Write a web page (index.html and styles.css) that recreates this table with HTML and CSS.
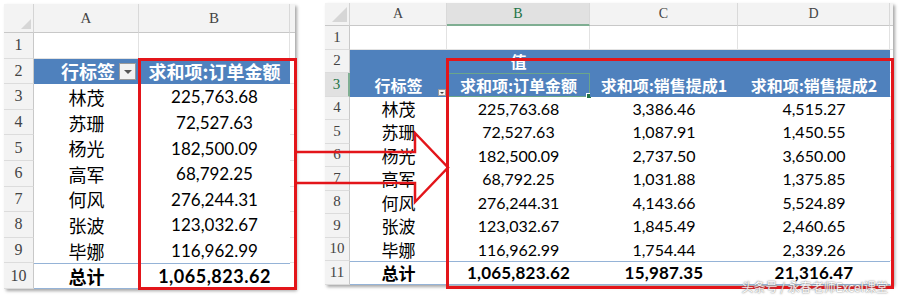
FILE: index.html
```html
<!DOCTYPE html>
<html lang="zh-CN">
<head>
<meta charset="utf-8">
<title>数据透视表</title>
<link rel="stylesheet" href="styles.css">
</head>
<body>
<div class="stage">
  <div class="sheet sheet-l">
    <div class="corner"><span class="tri"></span></div>
    <div class="ch">A</div><div class="ch">B</div><div class="ch edge"></div>

    <div class="rn">1</div><div class="c"></div><div class="c"></div><div class="c edge"></div>

    <div class="rn">2</div>
    <div class="ph ph-label"><span>行标签</span><span class="dd"></span></div>
    <div class="ph">求和项:订单金额</div>
    <div class="c edge"></div>

    <div class="rn">3</div><div class="d name">林茂</div><div class="d num">225,763.68</div><div class="c edge"></div>
    <div class="rn">4</div><div class="d name">苏珊</div><div class="d num">72,527.63</div><div class="c edge"></div>
    <div class="rn">5</div><div class="d name">杨光</div><div class="d num">182,500.09</div><div class="c edge"></div>
    <div class="rn">6</div><div class="d name">高军</div><div class="d num">68,792.25</div><div class="c edge"></div>
    <div class="rn">7</div><div class="d name">何风</div><div class="d num">276,244.31</div><div class="c edge"></div>
    <div class="rn">8</div><div class="d name">张波</div><div class="d num">123,032.67</div><div class="c edge"></div>
    <div class="rn">9</div><div class="d name">毕娜</div><div class="d num">116,962.99</div><div class="c edge"></div>
    <div class="rn">10</div><div class="d name tot">总计</div><div class="d num tot">1,065,823.62</div><div class="c edge"></div>

    <div class="redbox"></div>
  </div>

  <div class="sheet sheet-r">
    <div class="corner"><span class="tri"></span></div>
    <div class="ch">A</div><div class="ch sel">B</div><div class="ch">C</div><div class="ch">D</div><div class="ch edge"></div>

    <div class="rn">1</div><div class="c"></div><div class="c"></div><div class="c"></div><div class="c"></div><div class="c edge"></div>

    <div class="rn">2</div><div class="ph"></div><div class="ph ph-val">值</div><div class="ph"></div><div class="ph"></div><div class="c edge"></div>

    <div class="rn sel">3</div>
    <div class="ph ph-label"><span>行标签</span><span class="dd-sm"></span></div>
    <div class="ph sel">求和项:订单金额</div>
    <div class="ph">求和项:销售提成1</div>
    <div class="ph">求和项:销售提成2</div>
    <div class="c edge"></div>

    <div class="rn">4</div><div class="d name">林茂</div><div class="d num">225,763.68</div><div class="d num">3,386.46</div><div class="d num">4,515.27</div><div class="c edge"></div>
    <div class="rn">5</div><div class="d name">苏珊</div><div class="d num">72,527.63</div><div class="d num">1,087.91</div><div class="d num">1,450.55</div><div class="c edge"></div>
    <div class="rn">6</div><div class="d name">杨光</div><div class="d num">182,500.09</div><div class="d num">2,737.50</div><div class="d num">3,650.00</div><div class="c edge"></div>
    <div class="rn">7</div><div class="d name">高军</div><div class="d num">68,792.25</div><div class="d num">1,031.88</div><div class="d num">1,375.85</div><div class="c edge"></div>
    <div class="rn">8</div><div class="d name">何风</div><div class="d num">276,244.31</div><div class="d num">4,143.66</div><div class="d num">5,524.89</div><div class="c edge"></div>
    <div class="rn">9</div><div class="d name">张波</div><div class="d num">123,032.67</div><div class="d num">1,845.49</div><div class="d num">2,460.65</div><div class="c edge"></div>
    <div class="rn">10</div><div class="d name">毕娜</div><div class="d num">116,962.99</div><div class="d num">1,754.44</div><div class="d num">2,339.26</div><div class="c edge"></div>
    <div class="rn">11</div><div class="d name tot">总计</div><div class="d num tot">1,065,823.62</div><div class="d num tot">15,987.35</div><div class="d num tot">21,316.47</div><div class="c edge"></div>

    <div class="redbox"></div>
  </div>

  <svg class="arrow" viewBox="0 0 165 80" width="165" height="80" aria-hidden="true">
    <polyline points="6,24 125,24 125,5 158,39.5 125,74 125,55 6,55" fill="none" stroke="#e3151a" stroke-width="2.5" stroke-linejoin="miter"/>
  </svg>

  <div class="wm">头条号 / 永春老师Excel课堂</div>
</div>
</body>
</html>
```

FILE: styles.css
```css
* { box-sizing: border-box; }

body {
  margin: 0;
  background: #ffffff;
}

.stage {
  position: relative;
  width: 900px;
  height: 296px;
  display: flex;
  align-items: flex-start;
  overflow: hidden;
  background: #ffffff;
}

.sheet {
  position: relative;
  display: grid;
  background: #ffffff;
  box-shadow: 2px 2px 3px rgba(0, 0, 0, 0.35);
  font-family: "Lato", "Noto Sans CJK SC", sans-serif;
  color: #000;
}

.sheet-l {
  margin: 4px 0 0 4px;
  grid-template-columns: 30px 105px 151px 5px;
  grid-template-rows: 29px repeat(10, 25.6px);
}

.sheet-r {
  margin: 3px 0 0 30px;
  grid-template-columns: 25px 97px 143px 148px 152px 3px;
  grid-template-rows: 23px repeat(11, 23.5px);
}

/* headers */
.corner {
  position: relative;
  background: #f3f3f3;
  border-right: 1px solid #d4d4d4;
  border-bottom: 1px solid #c8c8c8;
}

.tri {
  position: absolute;
  right: 2px;
  bottom: 3px;
  width: 0;
  height: 0;
  border-left: 10px solid transparent;
  border-bottom: 10px solid #d6d6d6;
}

.sheet-r .tri {
  border-left-width: 15px;
  border-bottom-width: 15px;
}

.ch {
  display: flex;
  align-items: center;
  justify-content: center;
  background: #f3f3f3;
  border-right: 1px solid #d9d9d9;
  border-bottom: 1px solid #c8c8c8;
  font-family: "Liberation Serif", serif;
  font-size: 15px;
  color: #444;
}

.sheet-r .ch { font-size: 14px; }

.ch.sel {
  background: #e1e1e1;
  color: #217346;
  border-bottom: 2px solid #7fae92;
}

.rn {
  display: flex;
  align-items: center;
  justify-content: center;
  background: #f3f3f3;
  border-right: 1px solid #c8c8c8;
  border-bottom: 1px solid #dcdcdc;
  font-family: "Liberation Serif", serif;
  font-size: 16px;
  color: #444;
}

.sheet-r .rn { font-size: 15px; }

.rn.sel {
  background: #e1e1e1;
  color: #217346;
  border-right: 2px solid #7fae92;
}

.c {
  border-right: 1px solid #e2e2e2;
  border-bottom: 1px solid #e2e2e2;
}

.c.edge, .ch.edge { border-right: none; }

/* pivot header */
.ph {
  position: relative;
  display: flex;
  align-items: center;
  justify-content: center;
  background: #4f81bd;
  color: #ffffff;
  font-family: "Noto Sans CJK SC", sans-serif;
  font-weight: 700;
  white-space: nowrap;
}

.sheet-l .ph { font-size: 18px; }
.sheet-r .ph { font-size: 16px; }

.sheet-l .ph-label {
  justify-content: flex-end;
  gap: 4px;
  padding-right: 3px;
}

.sheet-r .ph-val { align-items: flex-end; }

.ph.sel {
  box-shadow: inset 0 0 0 1px #6aa58a;
}

.ph.sel::after {
  content: "";
  position: absolute;
  right: -2px;
  bottom: -2px;
  width: 4px;
  height: 4px;
  background: #217346;
  border: 1px solid #fff;
}

.dd {
  position: relative;
  width: 17px;
  height: 17px;
  background: #f2f2f2;
  border: 1px solid #9a9a9a;
}

.dd::after {
  content: "";
  position: absolute;
  left: 4px;
  top: 6px;
  border-left: 4px solid transparent;
  border-right: 4px solid transparent;
  border-top: 4px solid #555;
}

.dd-sm {
  position: absolute;
  right: 1px;
  bottom: 1px;
  width: 8px;
  height: 7px;
  background: #f4f4f4;
  border: 1px solid #9a9a9a;
}

.dd-sm::after {
  content: "";
  position: absolute;
  left: 1px;
  top: 2px;
  border-left: 2px solid transparent;
  border-right: 2px solid transparent;
  border-top: 2px solid #444;
}

/* data */
.d {
  display: flex;
  align-items: center;
  justify-content: center;
  white-space: nowrap;
}

.name { font-family: "Noto Sans CJK SC", sans-serif; }

.sheet-l .name { font-size: 18px; }
.sheet-l .num { font-size: 17px; }
.sheet-r .name { font-size: 17px; }
.sheet-r .num { font-size: 16px; }

.tot {
  font-weight: 700;
  border-top: 1px solid #95b3d7;
  border-bottom: 1px solid #95b3d7;
}

.sheet-l .num.tot { font-size: 18px; letter-spacing: 0.5px; }
.sheet-r .num.tot { font-size: 17px; letter-spacing: 0.2px; }

/* overlays */
.redbox {
  position: absolute;
  border: 3px solid #e3151a;
  pointer-events: none;
}

.sheet-l .redbox {
  left: 134px;
  top: 54px;
  width: 159px;
  height: 232px;
}

.sheet-r .redbox {
  left: 121px;
  top: 55px;
  width: 448px;
  height: 231px;
}

.arrow {
  position: absolute;
  left: 290px;
  top: 128px;
}

.wm {
  position: absolute;
  right: 12px;
  bottom: 2px;
  font-family: "Noto Sans CJK SC", sans-serif;
  font-size: 12px;
  line-height: 14px;
  color: #ffffff;
  text-shadow: 0 0 2px #777, 0 0 1px #777;
  opacity: 0.85;
}
```
